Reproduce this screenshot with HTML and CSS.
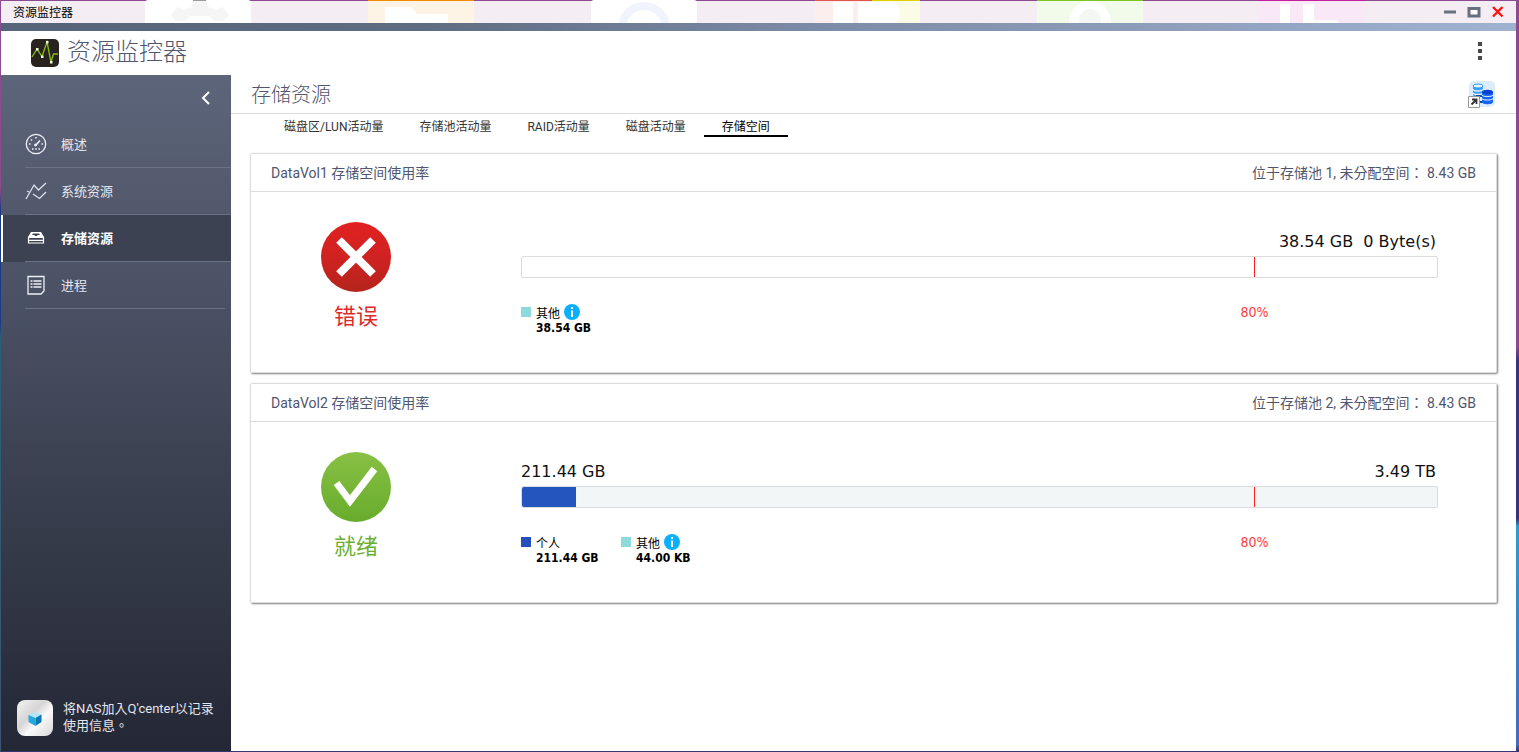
FILE: index.html
```html
<!DOCTYPE html>
<html lang="zh-CN">
<head>
<meta charset="utf-8">
<title>资源监控器</title>
<link rel="stylesheet" href="styles.css">
</head>
<body>
<svg class="desktop-tiles" width="1519" height="24" aria-hidden="true">
  <rect x="145" width="106" height="24" rx="3" fill="#fff"/>
  <path d="M193 0h13l2 7 8 3 7-3 6 8-5 6h-10l-5-5h-19l-5 5h-10l-4-6 6-8 7 3 8-3z" fill="#9a9a9a"/>
  <rect x="368" width="106" height="24" fill="#f08a00"/>
  <path d="M385 7h26l6 7h31v10h-63z" fill="#fff"/>
  <rect x="591" width="106" height="24" rx="3" fill="#fff"/>
  <circle cx="644" cy="28" r="22" fill="none" stroke="#7f8fe8" stroke-width="8"/>
  <rect x="815" width="57" height="24" fill="#e2574c"/>
  <rect x="872" width="48" height="24" fill="#e0d000"/>
  <path d="M833 2h20v22h-20zM858 2h28v22h-28z" fill="#fff"/>
  <circle cx="889" cy="13" r="11" fill="#fff"/>
  <rect x="1037" width="106" height="24" fill="#7cc520"/>
  <circle cx="1090" cy="22" r="21" fill="#fff"/>
  <circle cx="1090" cy="20" r="11" fill="#9bb08f"/>
  <rect x="1258" width="108" height="24" fill="#c4209e"/>
  <path d="M1280 4h10v20h-10zM1303 4h11v16h24v4h-35z" fill="#fff"/>
</svg>

<div class="window">
  <header class="titlebar">
    <span>资源监控器</span>
    <div class="window-buttons">
      <button type="button" aria-label="最小化"><svg width="14" height="14"><path d="M1 7h12" stroke="#66707f" stroke-width="3"/></svg></button>
      <button type="button" aria-label="最大化"><svg width="14" height="14"><path d="M2 3.500h10v7.500H2z" fill="#fff" stroke="#66707f" stroke-width="3"/></svg></button>
      <button type="button" aria-label="关闭"><svg width="14" height="14"><path d="M2 2l9.500 9.500M11.500 2L2 11.500" stroke="#fa1414" stroke-width="2.400"/></svg></button>
    </div>
  </header>
  <div class="strip"></div>

  <div class="app-header">
    <svg width="28" height="28" viewBox="0 0 28 28" aria-hidden="true">
      <rect width="28" height="28" rx="5" fill="#29231f"/>
      <path d="M1 18l5-8 5 7.500L16 3l4 20 2.500-8H27" fill="none" stroke="#86bc18" stroke-width="1.300"/>
      <path d="M5 9h2.500v2.500H5zM10 16.500h2.500V19H10zM15 2h2.500v2.500H15zM19 22h2.500v2.500H19z" fill="#f0ffd8"/>
    </svg>
    <h1>资源监控器</h1>
    <button type="button" class="more" aria-label="更多"><svg width="6" height="20"><path d="M1 1h4v4H1zM1 8h4v4H1zM1 15h4v4H1z" fill="#484848"/></svg></button>
  </div>

  <div class="workspace">
    <aside class="sidebar">
      <button type="button" class="collapse" aria-label="收起"><svg width="10" height="14" fill="none"><path d="M8 1L2 7l6 6" stroke="#fff" stroke-width="2"/></svg></button>
      <nav>
        <a href="#overview" class="nav-item">
          <svg width="22" height="22" viewBox="0 0 22 22" fill="none" stroke="#eef0f6"><circle cx="11" cy="11" r="9.700" stroke-width="1.300"/><path d="M10.500 12.500L15 7.500" stroke-width="1.600"/><path d="M4 11h1.500M16.500 11H18M6 6.500l1 1M11 4v1.500M7 16h1.500M10.200 16h1.600M13.500 16H15" stroke-width="1.500"/><circle cx="10.500" cy="12" r="1" fill="#eef0f6"/></svg>
          <span>概述</span></a>
        <a href="#system" class="nav-item">
          <svg width="22" height="22" viewBox="0 0 22 22" fill="none" stroke="#dfe2ec" stroke-width="1.300"><path d="M1 19L9 5l4.500 5L21 3M2 11l2 1M8 14l6.500 4.500L21 12"/></svg>
          <span>系统资源</span></a>
        <a href="#storage" class="nav-item selected" aria-current="page">
          <svg width="22" height="22" viewBox="0 0 22 22" fill="#fff"><path d="M6 5h10l3 5H3zM8 6.500L7 8h2.500l.5 1h2l.5-1H15l-1-1.500z" fill-rule="evenodd"/><path d="M3.500 10.500h15v5.500h-15zM3 13.300h16" fill="none" stroke="#fff" stroke-width="1.200"/></svg>
          <span>存储资源</span></a>
        <a href="#process" class="nav-item">
          <svg width="22" height="22" viewBox="0 0 22 22" fill="none" stroke="#eef0f6"><path d="M3 2.500h16v14.500l-3 3H3z" stroke-width="1.300"/><path d="M5.500 7h2M8.500 7h8M5.500 10h2M8.500 10h8M5.500 13h2M8.500 13h8" stroke-width="1.300"/></svg>
          <span>进程</span></a>
      </nav>
      <a href="#qcenter" class="promo">
        <svg width="36" height="36" viewBox="0 0 36 36" aria-hidden="true">
          <defs><linearGradient id="metal" x2="1" y2="1"><stop stop-color="#f4f4f4"/><stop offset=".4" stop-color="#d6d4d4"/><stop offset=".6" stop-color="#fafafa"/><stop offset="1" stop-color="#d8d6d6"/></linearGradient></defs>
          <rect width="36" height="36" rx="8" fill="url(#metal)"/>
          <path d="M11.500 15l7-3 6 2.500-6 3.500z" fill="#b5e6f7"/>
          <path d="M11.500 15l7 3v8l-7-4z" fill="#25a8dc"/>
          <path d="M18.500 18l6-3.500v7.500l-6 4z" fill="#0978b4"/>
        </svg>
        <span lang="zh-TW">将NAS加入Q'center以记录使用信息。</span>
      </a>
    </aside>

    <main>
      <div class="page-head">
        <h2>存储资源</h2>
        <button type="button" aria-label="存储管理">
          <svg width="28" height="28" viewBox="0 0 28 28">
            <rect x="1" y="1" width="26" height="26" rx="5" fill="#dcecf9"/>
            <path d="M5 6v9c0 3 10 3 10 0V6" fill="#3ba0ff"/><ellipse cx="10" cy="6" rx="5" ry="2" fill="#e8f5ff" stroke="#2f96fa"/>
            <path d="M5 9.500c1 2 9 2 10 0M5 13c1 2 9 2 10 0" fill="none" stroke="#e8f5ff" stroke-width="1.300"/>
            <path d="M9 16h7v6H9z" fill="#e8f5ff" stroke="#084a9c" stroke-width="2"/>
            <path d="M14 12v10c0 3 11 3 11 0V12" fill="#1764ee"/><ellipse cx="19.500" cy="12" rx="5.500" ry="2.300" fill="#0a3fd0"/>
            <path d="M14 15c1 2 10 2 11 0M14 18.500c1 2 10 2 11 0" fill="none" stroke="#cfe4ff" stroke-width="1.200"/>
            <path d="M.5 16.500h11v11H.5z" fill="#fff" stroke="#999"/>
            <path d="M3.500 24.500l4-4M4 19.500h4.500V24" fill="none" stroke="#333" stroke-width="1.800"/>
          </svg>
        </button>
      </div>
      <nav class="tabs">
        <a href="#lun">磁盘区/LUN活动量</a>
        <a href="#pool">存储池活动量</a>
        <a href="#raid">RAID活动量</a>
        <a href="#disk">磁盘活动量</a>
        <a href="#space" class="active" aria-current="page">存储空间</a>
      </nav>

      <div class="cards">
        <section class="card">
          <div class="card-head"><h3>DataVol1 存储空间使用率</h3><span lang="zh-TW">位于存储池 1, 未分配空间： 8.43 GB</span></div>
          <div class="card-body">
            <div class="status error">
              <svg width="70" height="70" viewBox="0 0 70 70" aria-hidden="true">
                <defs><linearGradient id="red" x2="0" y2="1"><stop stop-color="#e22020"/><stop offset=".5" stop-color="#d02222"/><stop offset="1" stop-color="#b4241c"/></linearGradient></defs>
                <circle cx="35" cy="35" r="35" fill="url(#red)"/>
                <path d="M18 18l34 34M52 18L18 52" stroke="#fff" stroke-width="8"/>
              </svg>
              <span>错误</span>
            </div>
            <div class="usage">
              <div class="amounts"><span></span><span>38.54 GB&nbsp; 0 Byte(s)</span></div>
              <div class="bar empty"><div class="limit"></div></div>
              <div class="details">
                <dl class="legend">
                  <div><dt><i class="swatch other"></i><span>其他</span>
                    <svg width="16" height="16" viewBox="0 0 16 16"><circle cx="8" cy="8" r="8" fill="#0ab0fc"/><path d="M7 3h2v2H7zM7 6.500h2V13H7z" fill="#fff"/></svg></dt><dd>38.54 GB</dd></div>
                </dl>
                <span class="limit-label">80%</span>
              </div>
            </div>
          </div>
        </section>

        <section class="card">
          <div class="card-head"><h3>DataVol2 存储空间使用率</h3><span lang="zh-TW">位于存储池 2, 未分配空间： 8.43 GB</span></div>
          <div class="card-body">
            <div class="status ready">
              <svg width="70" height="70" viewBox="0 0 70 70" aria-hidden="true">
                <defs><linearGradient id="green" x2="0" y2="1"><stop stop-color="#88c044"/><stop offset="1" stop-color="#68ac2c"/></linearGradient></defs>
                <circle cx="35" cy="35" r="35" fill="url(#green)"/>
                <path d="M15.500 31l13.500 18L53.500 17" fill="none" stroke="#fff" stroke-width="7"/>
              </svg>
              <span>就绪</span>
            </div>
            <div class="usage">
              <div class="amounts"><span>211.44 GB</span><span>3.49 TB</span></div>
              <div class="bar"><div class="fill" style="width: 5.9%"></div><div class="limit"></div></div>
              <div class="details">
                <dl class="legend">
                  <div><dt><i class="swatch personal"></i><span>个人</span></dt><dd>211.44 GB</dd></div>
                  <div><dt><i class="swatch other"></i><span>其他</span>
                    <svg width="16" height="16" viewBox="0 0 16 16"><circle cx="8" cy="8" r="8" fill="#0ab0fc"/><path d="M7 3h2v2H7zM7 6.500h2V13H7z" fill="#fff"/></svg></dt><dd>44.00 KB</dd></div>
                </dl>
                <span class="limit-label">80%</span>
              </div>
            </div>
          </div>
        </section>
      </div>
    </main>
  </div>
</div>
</body>
</html>
```

FILE: styles.css
```css
* { box-sizing: border-box; }

body {
  margin: 0;
  min-height: 100vh;
  padding: 1px 3px 1px 1px;
  display: flex;
  position: relative;
  overflow-x: hidden;
  background:
    linear-gradient(#8c4a90 0 25%, #1d3b80 28% 43%, #2a5f7c 45%, #3a5570) 0 0 / 1px 100% no-repeat,
    linear-gradient(#8c4a90 0 46%, #37347c 48% 69%, #2f9bcb 70%, #4668c0 99%, #33336a);
  font-family: Roboto, "Noto Sans CJK TC", sans-serif;
  font-size: 13px;
  color: #000;
}

h1, h2, h3, dl, dd { margin: 0; font-weight: 400; }
a { color: inherit; text-decoration: none; }
svg { display: block; flex: none; }

button {
  padding: 0;
  border: 0;
  background: none;
  cursor: pointer;
}

.desktop-tiles {
  position: absolute;
  top: 0;
  left: 0;
}

.window {
  position: relative;
  flex: 1;
  display: flex;
  flex-direction: column;
}

.titlebar {
  height: 22px;
  padding: 0 11px 0 12px;
  display: flex;
  align-items: center;
  justify-content: space-between;
  background: rgba(255, 255, 255, .9);
  font-family: "Noto Sans CJK SC", sans-serif;
  font-size: 12px;
  line-height: 20px;
}

.window-buttons { display: flex; gap: 10px; }

.strip {
  height: 8px;
  background: linear-gradient(90deg, #56647a, #5f6d82 28%, #7d8ca8 55%, #9fb3d0);
}

.app-header {
  height: 44px;
  padding: 0 30px;
  display: flex;
  align-items: center;
  gap: 8px;
  background: #fff;
}

.app-header h1 {
  font-family: "Noto Sans CJK SC", sans-serif;
  font-size: 24px;
  font-weight: 300;
  line-height: 38px;
  padding-bottom: 6px;
  color: #50566e;
}

.more { margin-left: auto; padding: 0 3px 4px; }

.workspace { flex: 1; display: flex; }

.sidebar {
  width: 230px;
  flex: none;
  display: flex;
  flex-direction: column;
  background: linear-gradient(#5d657a, #4a5063 35%, #353a49 70%, #242735);
  color: #e4e6ee;
}

.collapse {
  align-self: flex-end;
  height: 46px;
  padding: 0 20px;
}

.nav-item {
  height: 47px;
  padding: 0 0 2px 24px;
  display: flex;
  align-items: center;
  gap: 14px;
  position: relative;
}

.nav-item::after {
  content: "";
  position: absolute;
  left: 24px;
  right: 0;
  bottom: 0;
  height: 1px;
  background: #6c7286;
}

.nav-item:last-child::after { right: 6px; }

.nav-item.selected {
  background: #3d4253;
  box-shadow: inset 2px 0 #fff;
  color: #fff;
  font-weight: 700;
}

.promo {
  margin-top: auto;
  padding: 0 14px 15px 16px;
  display: flex;
  align-items: center;
  gap: 10px;
  line-height: 17px;
}

.promo span { padding-bottom: 2px; }

main { flex: 1; min-width: 0; background: #fff; }

.page-head {
  height: 39px;
  padding: 0 20px;
  display: flex;
  align-items: center;
  justify-content: space-between;
  border-bottom: 1px solid #dcdcdc;
}

.page-head h2 {
  padding-bottom: 2px;
  font-family: "Noto Sans CJK SC", sans-serif;
  font-size: 20px;
  font-weight: 300;
  color: #50566e;
}

.tabs {
  padding-left: 35px;
  display: flex;
  font-size: 12px;
}

.tabs a {
  padding: 0 18px;
  height: 23px;
  color: #333;
  font-family: Roboto, "Noto Sans CJK SC", sans-serif;
  line-height: 26px;
}

.tabs .active { border-bottom: 2px solid #000; color: #000; }

.cards {
  padding: 16px 19px 16px 19px;
  display: grid;
  gap: 10px;
}

.card {
  border: 1px solid #dcdcdc;
  border-radius: 2px;
  box-shadow: 1px 1px 2px rgba(0, 0, 0, .5);
}

.card-head {
  height: 38px;
  padding: 0 20px 2px;
  display: flex;
  align-items: center;
  justify-content: space-between;
  border-bottom: 1px solid #dcdcdc;
  color: #50566e;
  font-size: 14px;
}

.card-head h3 { font-size: 14px; }

.card-body {
  min-height: 180px;
  padding: 30px 58px 20px 0;
  display: flex;
  gap: 60px;
}

.status {
  width: 210px;
  flex: none;
  display: flex;
  flex-direction: column;
  align-items: center;
  gap: 6px;
  font-family: "Noto Sans CJK SC", sans-serif;
  font-size: 22px;
  line-height: 32px;
}

.error { color: #e02a2a; }
.ready { color: #6cb033; }

.usage {
  flex: 1;
  font-family: "DejaVu Sans Condensed", "DejaVu Sans", "Noto Sans CJK SC", sans-serif;
}

.amounts {
  height: 34px;
  padding: 8px 2px 0 0;
  display: flex;
  justify-content: space-between;
  font-family: "DejaVu Sans", sans-serif;
  font-size: 16px;
  line-height: 24px;
  color: #111;
}

.bar {
  height: 22px;
  position: relative;
  border: 1px solid #d9dddf;
  border-radius: 2px;
  background: #f3f6f7;
}

.bar.empty { background: #fff; }

.fill {
  height: 100%;
  border-radius: 2px 0 0 2px;
  background: #2455bf;
}

.limit {
  position: absolute;
  top: 0;
  bottom: 0;
  left: 80%;
  width: 1px;
  background: #ff2020;
}

.details { position: relative; padding-top: 26px; }

.legend { display: flex; font-size: 12px; }
.legend > div { min-width: 100px; }

.legend dt {
  display: flex;
  align-items: center;
  height: 16px;
}

.legend dt span { padding-top: 3px; line-height: 16px; }
.legend dt svg { margin-left: 4px; }
.legend dd { padding-left: 15px; font-weight: 700; line-height: 17px; }

.swatch {
  width: 10px;
  height: 10px;
  margin-right: 5px;
}

.personal { background: #2450bc; }
.other { background: #8cdada; }

.limit-label {
  position: absolute;
  top: 26px;
  left: 80%;
  transform: translateX(-50%);
  font-size: 14px;
  line-height: 16px;
  color: #ff3b3b;
}
```
